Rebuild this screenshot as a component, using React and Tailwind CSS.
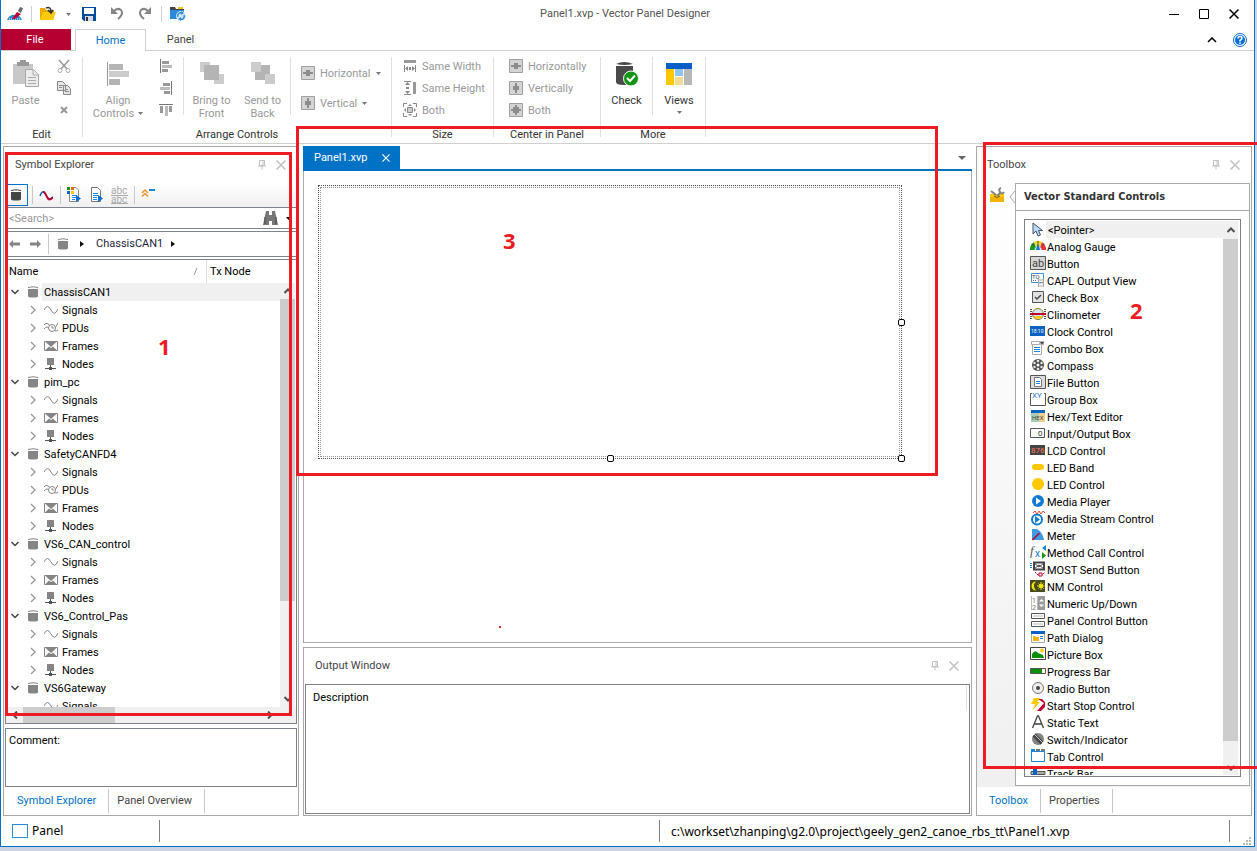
import React from "react";

const tree = [
    { name: "ChassisCAN1", children: ["Signals", "PDUs", "Frames", "Nodes"] },
    { name: "pim_pc", children: ["Signals", "Frames", "Nodes"] },
    { name: "SafetyCANFD4", children: ["Signals", "PDUs", "Frames", "Nodes"] },
    { name: "VS6_CAN_control", children: ["Signals", "Frames", "Nodes"] },
    { name: "VS6_Control_Pas", children: ["Signals", "Frames", "Nodes"] },
    { name: "VS6Gateway", children: ["Signals"], partial: true },
];

const Svg = ({ w = 16, h = 16, className = "", children }) => (
    <svg width={w} height={h} viewBox={`0 0 ${w} ${h}`} fill="none" className={`shrink-0 ${className}`} aria-hidden="true">
        {children}
    </svg>
);

const T = ({ x, y, size, fill, children }) => (
    <text x={x} y={y} fontSize={size} fill={fill} fontFamily="Roboto, sans-serif">{children}</text>
);

// toolbox entries, icon drawn on a 16x16 grid
const tools = [
    ["<Pointer>", <path d="M3 2v11l3-3 2 5 2.500-1-2-4.500h4z" fill="#b9d9f5" stroke="#44546a" />],
    ["Analog Gauge", <><path d="M0 12a8 8 0 0 1 4-8l3 8z" fill="#1a9a1a" /><path d="M4 4a8 8 0 0 1 8 0l-4 8z" fill="#ffd21c" /><path d="M12 4a8 8 0 0 1 4 8H9z" fill="#e23b3b" /><path d="M4.500 12a3.500 3.500 0 0 1 7 0z" fill="#cfe6fa" /><path d="m2 6 2 1.500M14 6l-2 1.500M8 3v2" stroke="#444" /><path d="m8 4 2 8H6z" fill="#1673c9" /></>],
    ["Button", <><path d="M.5 1.500h15v13H.5z" fill="#d6d6d6" stroke="#555" /><T x={2} y={12} size={11} fill="#444">ab</T></>],
    ["CAPL Output View", <><path d="M1.500 1.500h12v9h-12z" fill="#fff" stroke="#3d93db" /><T x={2} y={7} size={6} fill="#444">TO</T><path d="M3 8.500h4" stroke="#666" strokeDasharray="1 1" /><path d="M8.500 5v10M13.500 7v8M8.500 8h5M8.500 11h5M8.500 14h5" stroke="#aaa" /></>],
    ["Check Box", <><path d="M2.500 2.500h11v11h-11z" fill="#e3e3e3" stroke="#555" /><path d="m5 8 2 2 4-4" stroke="#444" strokeWidth="1.500" /></>],
    ["Clinometer", <><circle cx="8" cy="8" r="5.500" fill="#cfe6fa" stroke="#9a7a16" /><path d="M3.500 10h9a5 5 0 0 1-9 0" fill="#ffc800" /><path d="M0 8h16" stroke="#c00030" strokeWidth="2" /><path d="M0 3.500h2M0 5.500h2M0 10.500h2M0 12.500h2M14 3.500h2M14 5.500h2M14 10.500h2M14 12.500h2" stroke="#555" /></>],
    ["Clock Control", <><path d="M0 3h15v10H0z" fill="#0a63c2" /><T x={1} y={10} size={5} fill="#fff">18:10</T></>],
    ["Combo Box", <><path d="M1.500 1.500h12v3h-12z" fill="#fff" stroke="#aaa" /><path d="M9 1h5v4H9z" fill="#bbb" /><path d="M10 2h4l-2 2.500z" fill="#444" /><path d="M2.500 5v9.500h9V5" stroke="#aaa" /><path d="M4 7.500h6M4 9.500h6M4 11.500h6" stroke="#1b86dd" /></>],
    ["Compass", <><circle cx="8" cy="8" r="6" fill="#505050" /><circle cx="8" cy="8" r="1.500" fill="#fff" /><g fill="#e8e8e8"><circle cx="8" cy="4" r="1.300" /><circle cx="8" cy="12" r="1.300" /><circle cx="4.500" cy="6" r="1.200" /><circle cx="11.500" cy="6" r="1.200" /><circle cx="4.500" cy="10" r="1.200" /><circle cx="11.500" cy="10" r="1.200" /></g></>],
    ["File Button", <><path d="M.5 1.500h15v13H.5z" fill="#dcdcdc" stroke="#555" /><path d="M4.500 3.500h5l2 2v7h-7z" fill="#fff" stroke="#777" /><path d="M6 7.500h4M6 9.500h4" stroke="#1b86dd" /></>],
    ["Group Box", <><path d="M2 2.500H.5v12h15v-12H14" stroke="#555" /><T x={2} y={7} size={8} fill="#2f7ec4">XY</T></>],
    ["Hex/Text Editor", <><path d="M1 2h14v3H1z" fill="#0a63c2" /><path d="M1 5h8v9H1z" fill="#a9cbb8" /><path d="M9 5h6v9H9z" fill="#f5cf90" /><T x={2} y={12} size={6} fill="#444">HEX</T></>],
    ["Input/Output Box", <><path d="M.5 3.500h14v9H.5z" fill="#fff" stroke="#555" /><T x={8} y={11} size={8} fill="#333">0</T></>],
    ["LCD Control", <><path d="M0 3h15v10H0z" fill="#444" /><T x={1} y={11} size={8} fill="#ff7a5a">876</T></>],
    ["LED Band", <rect x="2" y="5" width="12" height="6" rx="3" fill="#ffc800" />],
    ["LED Control", <circle cx="8" cy="8" r="6" fill="#ffc800" />],
    ["Media Player", <><circle cx="8" cy="8" r="6" fill="#0f7ad1" /><path d="M6 4.500v7L11 8z" fill="#fff" /></>],
    ["Media Stream Control", <><circle cx="7" cy="9.500" r="5" fill="#fff" stroke="#0f7ad1" strokeWidth="2" /><path d="M5 6v7l5-3.500z" fill="#0f7ad1" /><path d="m3 3 2-2 2 3 2-3 2 3 2-3 2 2" stroke="#e8452f" /></>],
    ["Meter", <><path d="M2 2h4c4 1 7 5 8 11H2z" fill="#3d9be0" /><path d="m2.500 13 7-7" stroke="#c00030" strokeWidth="1.500" /></>],
    ["Method Call Control", <><text x="0" y="11" fontSize="13" fontStyle="italic" fill="#555" fontFamily="Liberation Serif, serif">f</text><T x={5} y={13} size={10} fill="#1673c9">x</T><path d="M16 1v6l-4-3z" fill="#1b86dd" /><path d="M12 8v7l4-3.500z" fill="#149414" /></>],
    ["MOST Send Button", <><path d="M0 2.500h2M0 4.500h2M0 6.500h2" stroke="#1b86dd" /><path d="M4 1.500h10v7H4z" fill="#fff" stroke="#444" strokeWidth="2" /><path d="m4 8 5-4 5 4M4 2l5 4 5-4" stroke="#444" /><path d="M5 11l3 3h4l3-3" stroke="#c00030" strokeDasharray="2 1" /><path d="M9 12h3v3H9z" fill="#fff" stroke="#c00030" /></>],
    ["NM Control", <><path d="M0 2h15v12H0z" fill="#454d1c" /><path d="M6 3.500a4.500 4.500 0 1 0 0 9 6 6 0 0 1 0-9" fill="#f4e50a" /><circle cx="11" cy="8" r="2" fill="#f4e50a" /><path d="M11 4v8M7 8h7.500M8.500 5.500l5 5M13.500 5.500l-5 5" stroke="#f4e50a" /></>],
    ["Numeric Up/Down", <><path d="M1.500 1v14M7.500 1v14" stroke="#bbb" /><T x={2} y={8} size={7} fill="#777">1</T><T x={2} y={15} size={7} fill="#777">2</T><path d="M8 1h7v14H8z" fill="#9a9a9a" /><path d="M9 6.500h5L11.500 4zM9 9.500h5L11.500 12z" fill="#fff" /></>],
    ["Panel Control Button", <><path d="M1.500 1.500h13v5h-13zM1.500 9.500h13v5h-13z" fill="#fff" stroke="#555" /><path d="M3 4h10M3 12h10" stroke="#ddd" strokeWidth="2" /></>],
    ["Path Dialog", <><path d="M1.500 3.500h13v10h-13z" fill="#fff" stroke="#aaa" /><path d="M1 2h14v3H1z" fill="#0a63c2" /><path d="M3 7h2l1 1h3v4H3z" fill="#f0b400" /><path d="M10 7.500h3M10 9.500h3" stroke="#1b86dd" /></>],
    ["Picture Box", <><path d="M.5 1.500h15v12H.5z" fill="#fff" stroke="#444" /><circle cx="12" cy="4.500" r="2" fill="#ffc800" /><path d="M2 12V8q3-5 6-1l5 2 1 3z" fill="#0a8f0a" /></>],
    ["Progress Bar", <><path d="M.5 5.500h15v5H.5z" fill="#fff" stroke="#555" /><path d="M1 6h11v4H1z" fill="#0a8f0a" /></>],
    ["Radio Button", <><circle cx="8" cy="8" r="5.500" fill="#eee" stroke="#777" /><circle cx="8" cy="8" r="2" fill="#444" /></>],
    ["Start Stop Control", <><path d="M8 2h4l3 3v5l-4 4H7l7-8z" fill="#c00030" /><path d="M4 1h6L7 5h3l-7 8 2-6H1z" fill="#ffc800" /></>],
    ["Static Text", <path d="m2.500 14 5-12h1l5 12M4 10h8" stroke="#444" strokeWidth="1.300" />],
    ["Switch/Indicator", <><circle cx="8" cy="8" r="6" fill="#858585" /><path d="m4 4 8 8" stroke="#444" strokeWidth="4" /><path d="m4 3 9 9" stroke="#ccc" /></>],
    ["Tab Control", <><path d="M1.500 3.500h13v10h-13z" fill="#fff" stroke="#1b86dd" /><path d="M1 1h4v3H1z" fill="#1b86dd" /><path d="M6 2h4M11 2h4" stroke="#777" strokeWidth="2" /></>],
    ["Track Bar", <><path d="M1 6.500h14v3H1z" fill="#aaa" stroke="#555" /><path d="M3 4h4v7l-2 2-2-2z" fill="#0a63c2" /></>],
];

const Caret = ({ className = "text-[#777]" }) => (
    <Svg w={5} h={3} className={className}><path d="M0 0h5L2.500 3z" fill="currentColor" /></Svg>
);

const Db = ({ color = "#858585" }) => (
    <Svg w={10} h={12}>
        <path d="M0 3v7q0 1.500 5 1.500t5-1.500V3z" fill={color} />
        <path d="M0 1.500q5-1.500 10 0" stroke={color} />
    </Svg>
);

const Pin = () => (
    <Svg w={8} h={10}><path d="M1.500.5h5v5h-5zM5 1v4M0 6h8M4 6v3.500" stroke="#c2c2c2" /></Svg>
);

const Cross = ({ size = 10, color = "#c2c2c2" }) => (
    <Svg w={10} h={10} className={size === 8 ? "size-2" : ""}><path d="m.5.5 9 9m0-9-9 9" stroke={color} strokeWidth="1.500" /></Svg>
);

const childIcons = {
    Signals: <path d="M0 7q3.500-7 7 0t7-1" stroke="#858585" />,
    PDUs: <><path d="M0 4q3-4 7 2t7 3M0 8q3-4 6 0t8-6" stroke="#858585" /><circle cx="8" cy="7" r="3.500" fill="#fff" stroke="#858585" /><path d="M8 5v2h2" stroke="#858585" /></>,
    Frames: <><path d="M.5 2.500h13v9H.5z" stroke="#858585" /><path d="M1 2.500h12L7 8zM1 11.500l4-4 2 1.500 2-1.500 4 4z" fill="#858585" /></>,
    Nodes: <><path d="M3 1h7v7H3z" fill="#858585" /><path d="M6.500 8v4M1 11.500h11" stroke="#555" /><path d="M5 10h3v3H5z" fill="#555" /></>,
};

const Chevron = ({ open }) => (
    <Svg w={10} h={10}>
        {open ? <path d="m1.500 3 3.500 3.500L8.500 3" stroke="#444" strokeWidth="1.500" /> : <path d="m3 1 4 4-4 4" stroke="#999" strokeWidth="1.300" />}
    </Svg>
);

const Arrow = ({ className }) => (
    <Svg w={8} h={6} className={className}><path d="m.5 5 3.500-3.500L7.500 5" stroke="#505050" strokeWidth="2" /></Svg>
);

function PanelHeader({ title }) {
    return (
        <div className="flex h-9 shrink-0 items-center pl-2.5 pr-[11px]">
            <h2 className="flex-1 text-[#444]">{title}</h2>
            <button aria-label={`Pin ${title}`} className="mr-2.5"><Pin /></button>
            <button aria-label={`Close ${title}`}><Cross /></button>
        </div>
    );
}

function PanelTabs({ tabs }) {
    return (
        <div className="flex h-7 shrink-0 items-center text-[#444]">
            {tabs.map((t, i) => (
                <button key={t} className={`h-6 border-r border-[#c8c8c8] ${i === 0 ? "px-3 text-[#0072c6]" : "pl-2 pr-3"}`}>{t}</button>
            ))}
        </div>
    );
}

const Sep = () => <div className="mt-1.5 h-20 w-px shrink-0 bg-[#e0e0e0]" />;
const InnerSep = () => <div className="mt-0.5 h-[58px] w-px shrink-0 bg-[#e0e0e0]" />;

function Group({ label, className = "", children }) {
    return (
        <section className={`flex shrink-0 flex-col pt-1 ${className}`}>
            <div className="flex h-[70px]">{children}</div>
            <div className="h-[18px] text-center leading-5 text-[#333]">{label}</div>
        </section>
    );
}

function BigButton({ icon, lines, className = "", caret }) {
    return (
        <button className={`flex flex-col items-center leading-[13px] ${className}`}>
            <span className="mb-px flex h-[38px] items-center justify-center">{icon}</span>
            {lines.map((l, i) => (
                <span key={l} className="flex items-center gap-1 whitespace-nowrap">
                    {l}
                    {caret && i === lines.length - 1 && <Caret />}
                </span>
            ))}
        </button>
    );
}

const SmallButton = ({ icon, label, caret }) => (
    <button className="flex h-[22px] items-center gap-[5px] whitespace-nowrap text-[#999]">
        {icon}<span className="pt-0.5">{label}</span>{caret && <Caret />}
    </button>
);

const PlusIcon = ({ d }) => (
    <Svg w={14} h={14}><path d="M.5.5h13v13H.5z" fill="#d4d4d4" stroke="#a0a0a0" /><path d={d} fill="#8c8c8c" /></Svg>
);
const H = "M2 6h3V4h4v2h3v2H9v2H5V8H2z";
const V = "M6 2h2v3h2v4H8v3H6V9H4V5h2z";
const B = "M6 2h2v2h2v2h2v2h-2v2H8v2H6v-2H4V8H2V6h2V4h2z";

function TitleBar() {
    return (
        <header className="flex h-7 shrink-0 items-center">
            <div className="flex flex-1 items-center pl-1.5">
                <Svg><path d="M0 14a8 8 0 0 1 15 0z" fill="#2b8bd8" /><path d="M2 13h11M8 8v5" stroke="#fff" strokeDasharray="1 1" /><path d="m5 13 5-7 4 2-6 5z" fill="#c00030" /><path d="m11 5 2-4 3 1-2 5z" fill="#666" /></Svg>
                <span className="mx-2 h-4 w-px bg-[#d0d0d0]" />
                <button aria-label="Open"><Svg><path d="M0 2h5l1 2h8v9H0z" fill="#e8ac00" /><path d="M3 6h13l-3 8H0z" fill="#ffca0a" /><path d="M6 2q5-2 5 4m-3-2 3 3 2-3" stroke="#333" strokeWidth="1.500" /></Svg></button>
                <button aria-label="Open recent" className="ml-2.5"><Caret /></button>
                <button aria-label="Save" className="ml-2.5"><Svg><path d="M1 1h14v14H3l-2-2z" fill="#064a9c" /><path d="M3 2h10v6H3z" fill="#fff" /><path d="M4 10h8v5H4z" fill="#d4dbe3" /><path d="M5 11h2v4H5z" fill="#333" /></Svg></button>
                <button aria-label="Undo" className="ml-3"><Svg><path d="M2 1v7h7z" fill="#858585" /><path d="M4 6q4-5 8-2 3 4-3 9" stroke="#858585" strokeWidth="2" /></Svg></button>
                <button aria-label="Redo" className="ml-3"><Svg><path d="M14 1v7H7z" fill="#858585" /><path d="M12 6Q8 1 4 4q-3 4 3 9" stroke="#858585" strokeWidth="2" /></Svg></button>
                <span className="mx-2 h-4 w-px bg-[#d0d0d0]" />
                <button aria-label="Refresh workspace"><Svg><path d="M0 1h5l1 2h8v3H0z" fill="#444" /><path d="M8 1h5v2H8z" fill="#ffc800" /><path d="M0 4h14v9H0z" fill="#2b8bd8" /><circle cx="11" cy="10" r="5" fill="#d5e8f8" /><path d="M8 11a3 3 0 0 1 4-4M14 9a3 3 0 0 1-4 4" stroke="#2b8bd8" strokeWidth="1.500" /><path d="M11 5l3 2-3 2zM11 11l-3 2 3 2z" fill="#2b8bd8" /></Svg></button>
            </div>
            <h1 className="pl-1 text-[#555]">Panel1.xvp - Vector Panel Designer</h1>
            <div className="flex flex-1 items-center justify-end gap-5 pr-[15px]">
                <button aria-label="Minimize"><Svg w={10} h={10}><path d="M0 5.500h10" stroke="#000" /></Svg></button>
                <button aria-label="Maximize"><Svg w={10} h={10}><path d="M.5.5h9v9h-9z" stroke="#000" /></Svg></button>
                <button aria-label="Close"><Cross color="#000" /></button>
            </div>
        </header>
    );
}

function RibbonTabs() {
    return (
        <nav className="flex h-[23px] shrink-0 items-stretch border-b border-[#d0d0d0] pt-px">
            <button className="w-[70px] bg-[#b70032] pr-0.5 text-white">File</button>
            <button className="-mb-px ml-1 w-[71px] border border-b-0 border-[#d0d0d0] bg-white text-[#0072c6]">Home</button>
            <button className="w-[69px] pt-px text-[#444]">Panel</button>
            <div className="ml-auto flex items-center gap-4 pr-[7px]">
                <button aria-label="Collapse ribbon"><Svg w={10} h={6}><path d="m1 5 4-4 4 4" stroke="#000" strokeWidth="1.500" /></Svg></button>
                <button aria-label="Help"><Svg w={14} h={14}><circle cx="7" cy="7" r="6.500" fill="#fff" stroke="#0a6dd0" /><circle cx="7" cy="7" r="5" fill="#0a6dd0" /><path d="M5 5.500q0-2 2-2t2 1.500-2 2.500v1M7 9.500v1.500" stroke="#fff" strokeWidth="1.500" /></Svg></button>
            </div>
        </nav>
    );
}

function Ribbon() {
    return (
        <div className="flex h-[93px] shrink-0 overflow-hidden border-b border-[#d0d0d0] text-[#999]">
            <Group label="Edit" className="w-[81px]">
                <BigButton className="w-[49px]" lines={["Paste"]} icon={<Svg w={26} h={28}><path d="M0 4h20v20H0z" fill="#c8c8c8" /><path d="M4 2h3V0h6v2h3v4H4z" fill="#999" /><path d="M12.500 9.500h8l5 5v12h-13z" fill="#ececec" stroke="#aaa" /><path d="M20 10v5h5M15 17.500h8M15 20.500h8M15 23.500h8" stroke="#aaa" /></Svg>} />
                <div className="flex flex-col pl-[7px]">
                    <button aria-label="Cut" className="h-[22px]"><Svg w={14} h={14}><path d="m2 1 8 9M12 1 4 10" stroke="#999" strokeWidth="1.500" /><circle cx="3" cy="11.500" r="2" stroke="#aaa" /><circle cx="11" cy="11.500" r="2" stroke="#aaa" /></Svg></button>
                    <button aria-label="Copy" className="h-[22px]"><Svg w={14} h={14}><path d="M.5.5h5l3 3v6h-8zM6.500 4.500h4l3 3v6h-7z" fill="#e6e6e6" stroke="#888" /><path d="M2 4.500h4M2 6.500h3M8 8.500h3M8 10.500h4" stroke="#888" /></Svg></button>
                    <button aria-label="Delete" className="flex h-[22px] w-3.5 items-center justify-center"><Svg w={8} h={8}><path d="m1 1 6 6m0-6L1 7" stroke="#999" strokeWidth="2" /></Svg></button>
                </div>
            </Group>
            <Sep />
            <Group label="Arrange Controls" className="w-[308px]">
                <BigButton className="w-[70px]" caret lines={["Align", "Controls"]} icon={<Svg w={22} h={26}><path d="M.5 1v24" stroke="#999" /><path d="M2 3h14v6H2zM2 18h11v6H2z" fill="#b4b4b4" /><path d="M2 10h20v6H2z" fill="#ccc" /></Svg>} />
                <div className="flex w-[26px] flex-col items-center">
                    <button aria-label="Align left" className="h-[22px]"><Svg w={12} h={14}><path d="M.5 0v14" stroke="#777" /><path d="M2 2h7v3H2zM2 10h6v3H2z" fill="#999" /><path d="M2 6h10v3H2z" fill="#bbb" /></Svg></button>
                    <button aria-label="Align right" className="h-[22px]"><Svg w={12} h={14}><path d="M11.500 0v14" stroke="#777" /><path d="M3 2h7v3H3zM4 10h6v3H4z" fill="#999" /><path d="M0 6h10v3H0z" fill="#bbb" /></Svg></button>
                    <button aria-label="Align top" className="h-[22px]"><Svg w={14} h={13}><path d="M0 .5h14" stroke="#777" /><path d="M1 2h3v7H1zM10 2h3v6h-3z" fill="#999" /><path d="M6 2h3v10H6z" fill="#bbb" /></Svg></button>
                </div>
                <div className="w-1" />
                <InnerSep />
                <BigButton className="ml-0.5 w-[51px]" lines={["Bring to", "Front"]} icon={<Svg w={24} h={24}><path d="M0 0h10v10H0zM14 12h10v10H14z" fill="#ccc" /><path d="M4 3h15v15H4z" fill="#b4b4b4" /></Svg>} />
                <BigButton className="w-[51px]" lines={["Send to", "Back"]} icon={<Svg w={24} h={24}><path d="M4 3h15v15H4z" fill="#b4b4b4" /><path d="M0 0h10v10H0zM14 12h10v10H14z" fill="#ccc" /></Svg>} />
                <div className="w-[2px]" />
                <InnerSep />
                <div className="flex flex-col gap-2 pl-2.5 pt-[7px]">
                    <SmallButton icon={<PlusIcon d={H} />} label="Horizontal" caret />
                    <SmallButton icon={<PlusIcon d={V} />} label="Vertical" caret />
                </div>
            </Group>
            <Sep />
            <Group label="Size" className="w-[101px]">
                <div className="flex flex-col pl-[11px]">
                    <SmallButton icon={<Svg w={14} h={14}><path d="M1 1h12v3H1z" fill="#999" /><path d="M1.500 6v7M12.500 6v7" stroke="#888" /><path d="M2 9.500 5 7v5zM12 9.500 9 7v5zM6 8h2v3H6z" fill="#888" /></Svg>} label="Same Width" />
                    <SmallButton icon={<Svg w={14} h={14}><path d="M10 1h3v12h-3z" fill="#999" /><path d="M1 .5h7M1 13.500h7" stroke="#888" /><path d="M4.500 1 7 4H2zM4.500 13 7 10H2zM3 6h3v2H3z" fill="#888" /></Svg>} label="Same Height" />
                    <SmallButton icon={<Svg w={14} h={14}><path d="M4 .5H.5V4M10 .5h3.500V4M4 13.500H.5V10m9.500 3.500h3.500V10" stroke="#888" /><path d="M7 1l2 2H5zM7 13l2-2H5zM1 7l2-2v4zM13 7l-2-2v4z" fill="#888" /><path d="M4.500 4.500h5v5h-5z" fill="#ccc" stroke="#888" /></Svg>} label="Both" />
                </div>
            </Group>
            <Sep />
            <Group label="Center in Panel" className="w-[106px]">
                <div className="flex flex-col pl-[15px]">
                    <SmallButton icon={<PlusIcon d={H} />} label="Horizontally" />
                    <SmallButton icon={<PlusIcon d={V} />} label="Vertically" />
                    <SmallButton icon={<PlusIcon d={B} />} label="Both" />
                </div>
            </Group>
            <Sep />
            <Group label="More" className="w-[104px]">
                <BigButton className="w-[51px] text-[#333]" lines={["Check"]} icon={<Svg w={24} h={26}><path d="M1 5v16q0 3 8 3t9-3V5z" fill="#4a4a4a" /><path d="M1 3q8-4 17 0-9 2-17 0" fill="#4a4a4a" /><circle cx="16" cy="17.500" r="7.500" fill="#149414" stroke="#fff" /><path d="m12 17 3 3 5-5.500" stroke="#fff" strokeWidth="2" /></Svg>} />
                <InnerSep />
                <button className="flex w-[52px] flex-col items-center leading-[13px] text-[#333]">
                    <span className="mb-px flex h-[38px] items-center"><Svg w={26} h={22}><path d="M0 0h26v6H0z" fill="#0a5ec8" /><path d="M0 6h8v16H0z" fill="#ffc800" /><path d="M9 6h8v7H9z" fill="#8cc4f2" /><path d="M9 14h8v8H9z" fill="#f5dc94" /><path d="M18 6h8v16h-8z" fill="#b8b8b8" /></Svg></span>
                    Views
                    <span className="pt-1"><Caret /></span>
                </button>
            </Group>
            <Sep />
        </div>
    );
}

const ToolSep = () => <span className="h-[18px] w-px bg-[#c8c8c8]" />;

function SymbolExplorer() {
    return (
        <aside className="flex w-[296px] shrink-0 flex-col border border-[#a9a9a9] px-px">
            <PanelHeader title="Symbol Explorer" />
            <div className="flex h-6 shrink-0 items-center bg-gradient-to-b from-white to-[#f0f0f0]">
                <button aria-label="Databases" className="flex h-[22px] w-[23px] items-center justify-center border border-[#0072c6] pr-px"><Db color="#444" /></button>
                <span className="w-1" /><ToolSep />
                <button aria-label="Signal view" className="ml-1.5"><Svg w={14} h={12}><path d="M1 7q3-8 6-1t7 2" stroke="#0a63c2" strokeWidth="1.500" /><path d="M4 3q2 0 4 5t6 0" stroke="#c00030" strokeWidth="2" /></Svg></button>
                <span className="w-[7px]" /><ToolSep />
                <button aria-label="Show types" className="ml-1.5"><Svg><path d="M2.500 6v8.500h9V3L9 .5H7" fill="#fff" stroke="#888" /><path d="M0 0h3v3H0z" fill="#149414" /><path d="M4 0h3v3H4z" fill="#e66a00" /><path d="M0 4h3v3H0z" fill="#0a63c2" /><path d="M4 4h3v3H4z" fill="#ffc800" /><path d="M5 8.500h5M5 10.500h5M5 12.500h3" stroke="#1b86dd" /><path d="M9 8l5 3.500L9 15z" fill="#0a6dd0" /></Svg></button>
                <button aria-label="Show details" className="ml-[7px]"><Svg><path d="M1.500.5h6l3 3v11h-9z" fill="#fff" stroke="#777" /><path d="M3 6.500h5M3 8.500h5M3 10.500h4M3 12.500h4" stroke="#1b86dd" /><path d="M8 8l5 3.500L8 15z" fill="#0a6dd0" /></Svg></button>
                <button aria-label="Names" className="ml-[5px]"><Svg w={18} h={18}><T x={0} y={8} size={10} fill="#aaa">abc</T><path d="M0 9.500h17M0 17.500h17" stroke="#aaa" /><T x={0} y={17} size={10} fill="#aaa">abc</T></Svg></button>
                <span className="w-[5px]" /><ToolSep />
                <button aria-label="Collapse all" className="ml-1.5"><Svg w={15} h={16}><path d="m1 6 3-3 3 3M1 9.500l3-3 3 3" stroke="#f0932b" strokeWidth="1.500" /><path d="M8 3h6" stroke="#1b86dd" strokeWidth="2" /></Svg></button>
            </div>
            <div className="flex h-[22px] shrink-0 items-center border border-[#7d838c] pr-[5px]">
                <input aria-label="Search" placeholder="<Search>" className="w-0 flex-1 pl-[3px] pt-0.5 outline-none placeholder:text-[#999]" />
                <button aria-label="Find" className="mr-2"><Svg w={15} h={15}><path d="M3 0h3v4h3V0h3l3 14H9v-4H6v4H0z" fill="#777" /><path d="M2 6v7M13 6v7" stroke="#444" strokeWidth="1" /></Svg></button>
                <button aria-label="Search options"><Caret className="text-black" /></button>
            </div>
            <div className="mt-0.5 flex h-[26px] shrink-0 items-center border border-[#7d838c] pl-[3px]">
                <button aria-label="Back"><Svg w={11} h={8}><path d="M0 4l4-4v2.500h7v3H4V8z" fill="#858585" /></Svg></button>
                <button aria-label="Forward" className="ml-2.5"><Svg w={11} h={8}><path d="M11 4 7 0v2.500H0v3h7V8z" fill="#858585" /></Svg></button>
                <span className="ml-[7px] mr-[9px] h-5 w-px bg-[#c8c8c8]" />
                <Db />
                <Svg w={4} h={6} className="mx-3"><path d="M0 0v6l4-3z" fill="#111" /></Svg>
                <span className="text-[#1e1e3c]">ChassisCAN1</span>
                <Svg w={4} h={6} className="mx-2"><path d="M0 0v6l4-3z" fill="#111" /></Svg>
            </div>
            <div className="mt-0.5 flex min-h-0 flex-1 flex-col border border-[#7d838c] text-black" role="treegrid" aria-label="Symbols">
                <div className="flex h-[23px] shrink-0 items-center" role="row">
                    <span className="flex h-full w-[201px] items-center justify-between border-r border-[#e0e0e0] pl-[3px] pr-2" role="columnheader">
                        Name <Svg w={5} h={7}><path d="m1 7 3-7" stroke="#999" /></Svg>
                    </span>
                    <span className="pl-[3px]" role="columnheader">Tx Node</span>
                </div>
                <div className="flex min-h-0 flex-1 pr-px">
                    <div className="min-w-0 flex-1 overflow-hidden">
                        {tree.map((node, n) => (
                            <React.Fragment key={node.name}>
                                <div className="flex h-[18px] items-center" role="row">
                                    <span className="flex w-[18px] justify-center"><Chevron open /></span>
                                    <span className="flex w-[18px] justify-center"><Db /></span>
                                    <span className={n === 0 ? "h-full flex-1 bg-[#f0f0f0] pl-0.5 pt-px leading-[18px]" : "flex-1 pl-0.5 pt-0.5"}>{node.name}</span>
                                </div>
                                {node.children.map((c) => (
                                    <div key={c} className="flex h-[18px] items-center pl-[18px]" role="row">
                                        <span className="flex w-[18px] justify-center">{!node.partial && <Chevron />}</span>
                                        <span className="flex w-[18px] justify-center"><Svg w={14} h={14}>{childIcons[c]}</Svg></span>
                                        <span className="pl-0.5 pt-0.5">{c}</span>
                                    </div>
                                ))}
                            </React.Fragment>
                        ))}
                    </div>
                    <div className="flex w-[15px] shrink-0 flex-col items-center bg-[#f0f0f0]">
                        <Arrow className="my-[5px]" />
                        <div className="w-full grow-[77] bg-[#cdcdcd]" />
                        <div className="grow-[23]" />
                        <Arrow className="my-[5px] rotate-180" />
                    </div>
                </div>
                <div className="flex h-4 shrink-0 items-center bg-[#f0f0f0] pl-[5px] pr-[22px]">
                    <Arrow className="-rotate-90" />
                    <div className="ml-1 h-full w-[92px] bg-[#cdcdcd]" />
                    <Arrow className="ml-auto rotate-90" />
                </div>
            </div>
            <div className="mt-1 h-[59px] shrink-0 border border-[#7d838c] px-[3px] pt-1 text-black">Comment:</div>
            <PanelTabs tabs={["Symbol Explorer", "Panel Overview"]} />
        </aside>
    );
}

const Handle = ({ className }) => (
    <span className={`absolute size-[7px] rounded-[2px] border border-black bg-white ${className}`} />
);

function Workspace() {
    return (
        <main className="flex min-w-0 flex-1 flex-col">
            <div className="flex h-[25px] shrink-0 items-stretch border-b-2 border-[#0072c6]">
                <div className="flex w-[97px] items-center gap-3.5 bg-[#0072c6] pl-[11px] pt-px text-white">
                    Panel1.xvp
                    <button aria-label="Close Panel1.xvp"><Cross size={8} color="#fff" /></button>
                </div>
                <button aria-label="Open documents" className="ml-auto pr-1.5"><Svg w={8} h={4}><path d="M0 0h8L4 4z" fill="#666" /></Svg></button>
            </div>
            <div className="min-h-0 flex-1 overflow-hidden border border-t-0 border-[#a9a9a9] pl-3.5 pt-3.5">
                <div className="relative h-[274px] w-[584px] border border-dotted border-[#555] p-px">
                    <div className="h-full border border-dotted border-[#999]" />
                    <Handle className="-right-1 top-[133px]" />
                    <Handle className="-bottom-1 left-[288px]" />
                    <Handle className="-bottom-1 -right-1" />
                </div>
            </div>
            <section className="mt-1 flex h-[169px] shrink-0 flex-col border border-[#a9a9a9] p-px pt-0">
                <PanelHeader title="Output Window" />
                <div className="flex flex-1 items-start border border-[#808088] p-0.5 pt-px text-black">
                    <div className="h-6 flex-1 border-r border-[#e0e0e0] pl-[5px] leading-6">Description</div>
                </div>
            </section>
        </main>
    );
}

function Toolbox() {
    return (
        <aside className="flex w-[276px] shrink-0 flex-col border border-[#a9a9a9]">
            <PanelHeader title="Toolbox" />
            <div className="flex min-h-0 flex-1 bg-gradient-to-b from-white to-[#f0f0f0] pb-px pr-px">
                <div className="flex w-[38px] shrink-0 items-start pl-3 pt-1">
                    <button aria-label="Vector Standard Controls"><Svg><path d="M1 8h14v7H1z" fill="#f0b400" /><path d="M1 7h14v3H1z" fill="#ffca0a" /><path d="M5 9q3 3 6 0" stroke="#7a5c00" /><path d="m8 9 4-4M2 4l5 4" stroke="#858585" strokeWidth="2" /><path d="M12 1q-3 1-1 4t4 0" stroke="#858585" strokeWidth="2" /></Svg></button>
                    <Svg w={6} h={12} className="ml-1 mt-1"><path d="M6 0 1 6l5 6" stroke="#a9a9a9" fill="#fff" /></Svg>
                </div>
                <div className="flex min-h-0 flex-1 flex-col border border-[#a9a9a9] bg-white">
                    <h3 className="h-[27px] shrink-0 border-b border-[#a9a9a9] pl-2 font-bold leading-[26px] text-[#333] [font-family:'DejaVu_Sans_Condensed','Noto_Sans',sans-serif]">Vector Standard Controls</h3>
                    <div className="m-2 flex min-h-0 flex-1 border border-[#808088] py-px pl-px pr-0.5">
                        <ul className="min-w-0 flex-1 overflow-hidden pl-1 text-black">
                            {tools.map(([name, icon], i) => (
                                <li key={name}>
                                    <button className="flex h-[17px] w-full items-start text-left leading-[17px]">
                                        <Svg>{icon}</Svg>
                                        <span className={i === 0 ? "h-full flex-1 bg-[#f0f0f0] pl-0.5 pt-px" : "pl-px pt-px"}>{name}</span>
                                    </button>
                                </li>
                            ))}
                        </ul>
                        <div className="flex w-[15px] shrink-0 flex-col items-center bg-[#f0f0f0]">
                            <Arrow className="my-1.5" />
                            <div className="w-full flex-1 bg-[#cdcdcd]" />
                            <Arrow className="mb-1 mt-6 rotate-180" />
                        </div>
                    </div>
                </div>
            </div>
            <PanelTabs tabs={["Toolbox", "Properties"]} />
        </aside>
    );
}

function StatusBar() {
    return (
        <footer className="flex h-[30px] shrink-0 items-center text-xs text-black [font-family:'Noto_Sans',sans-serif]">
            <div className="flex h-[22px] w-[159px] items-center gap-1 border-r border-[#808080] pl-[11px]">
                <span className="h-3.5 w-4 border border-[#2b8bd8]" />
                Panel
            </div>
            <div className="h-[22px] w-[500px] border-r border-[#808080]" />
            <div className="h-[22px] flex-1 border-r border-[#808080] pl-[11px] leading-6">
                c:\workset\zhanping\g2.0\project\geely_gen2_canoe_rbs_tt\Panel1.xvp
            </div>
            <div className="flex h-full w-6 items-end justify-end pr-0.5">
                <Svg w={9} h={9}><path d="M6 0h2v2H6zM3 3h2v2H3zM6 3h2v2H6zM0 6h2v2H0zM3 6h2v2H3zM6 6h2v2H6z" fill="#bbb" /></Svg>
            </div>
        </footer>
    );
}

// numbered callouts drawn over the window
function Callouts() {
    return (
        <div className="pointer-events-none absolute inset-0 overflow-hidden text-[22px] font-bold leading-6 text-[#ed1c24] [font-family:'Open_Sans',sans-serif]">
            <div className="absolute left-[5px] top-[152px] h-[564px] w-[287px] border-3 border-[#ed1c24]" />
            <div className="absolute left-[296px] top-[126px] h-[350px] w-[642px] border-3 border-[#ed1c24]" />
            <div className="absolute left-[983px] top-[142px] h-[627px] w-[290px] border-3 border-[#ed1c24]" />
            <span className="absolute left-[158px] top-[334px]">1</span>
            <span className="absolute left-[1130px] top-[298px]">2</span>
            <span className="absolute left-[503px] top-[228px]">3</span>
            <span className="absolute left-[499px] top-[626px] size-0.5 bg-[#ed1c24]" />
        </div>
    );
}

export default function App() {
    return (
        <div className="relative flex h-screen flex-col overflow-hidden bg-[#ccd3e2] pb-1 pr-0.5 text-[11px] leading-4 [font-family:Roboto,sans-serif]">
            <div className="flex min-h-0 flex-1 flex-col border border-t-0 border-[#0072c6] bg-white">
                <TitleBar />
                <RibbonTabs />
                <Ribbon />
                <div className="flex min-h-0 flex-1 gap-1 px-0.5 pt-0.5">
                    <SymbolExplorer />
                    <Workspace />
                    <Toolbox />
                </div>
                <StatusBar />
            </div>
            <Callouts />
        </div>
    );
}
